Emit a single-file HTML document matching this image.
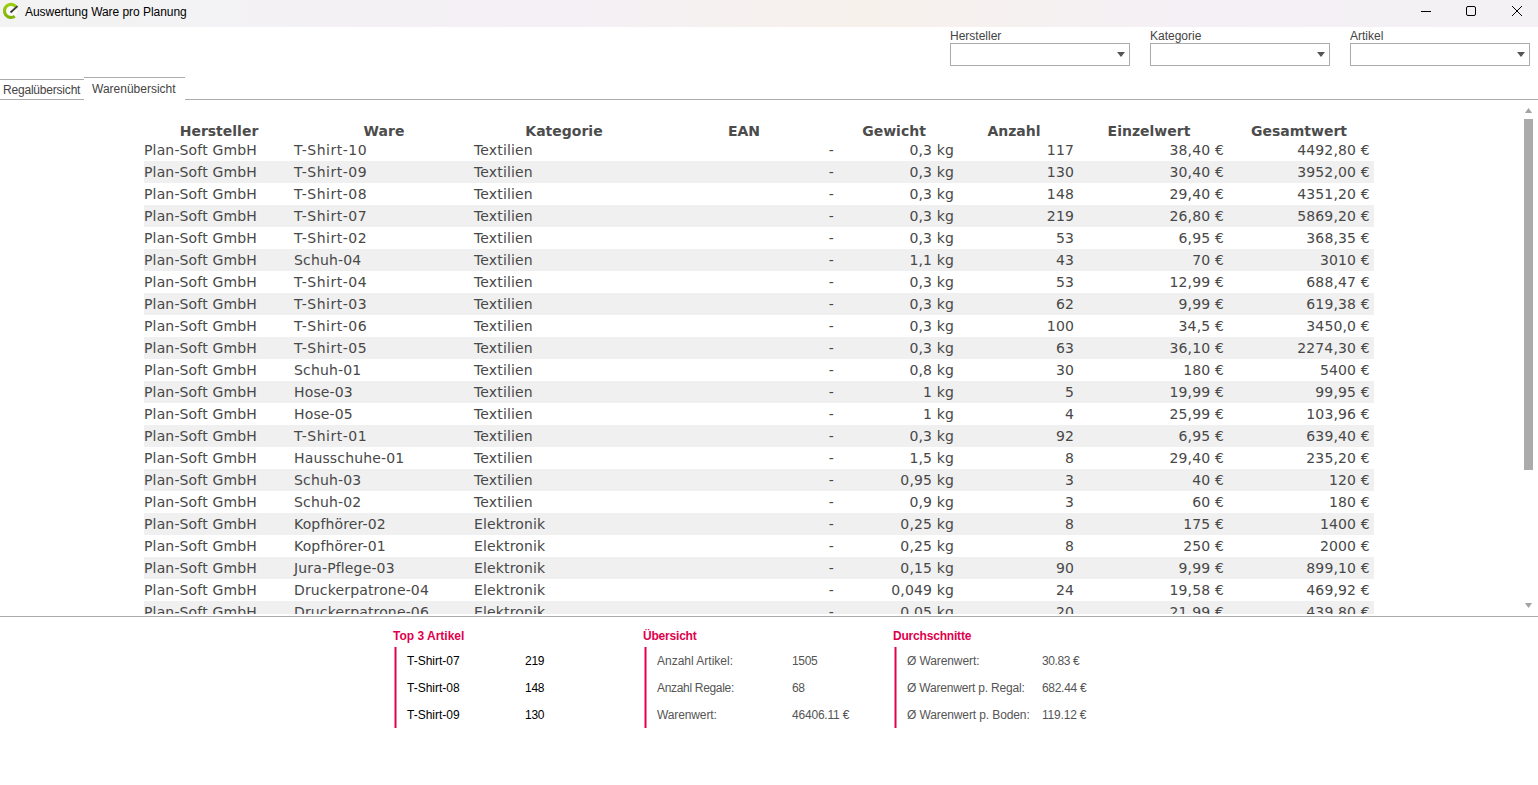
<!DOCTYPE html>
<html lang="de"><head><meta charset="utf-8"><title>Auswertung Ware pro Planung</title>
<style>
html,body{margin:0;padding:0;background:#fff;}
body{width:1538px;height:785px;position:relative;overflow:hidden;font-family:"Liberation Sans",sans-serif;font-size:12px;color:#000;}
.abs{position:absolute;white-space:nowrap;line-height:14px;}
#titlebar{position:absolute;left:0;top:0;width:1538px;height:27px;background:linear-gradient(90deg,#f3f3f3 0,#f3f2f4 200px,#f4f0f5 560px,#f6f1ef 760px,#f7f1ec 860px,#f6f1f0 1000px,#f4f0f5 1200px,#f3f1f4 1538px);}
.lbl{color:#444;}
.combo{position:absolute;top:43px;width:178px;height:21px;border:1px solid #ababab;background:#fff;}
.combo i{position:absolute;right:4px;top:8px;width:0;height:0;border-left:4px solid transparent;border-right:4px solid transparent;border-top:5px solid #555;}
.hl{position:absolute;height:1px;background:#acacac;}
#tbl{position:absolute;left:0;top:100px;width:1520px;height:514px;overflow:hidden;font-family:"DejaVu Sans","Liberation Sans",sans-serif;font-size:14px;color:#484848;}
.h,.r{position:absolute;left:144px;width:1230px;height:22px;line-height:22px;white-space:nowrap;}
.h{top:20px;font-weight:bold;color:#4c4c4c;}
.r{letter-spacing:0.15px;}
.r .t{letter-spacing:0.5px;}
.h span,.r span{position:absolute;top:0;height:22px;box-sizing:border-box;}
.h span{text-align:center;}
.c1{left:0;width:150px;}
.c2{left:150px;width:180px;}
.c3{left:330px;width:180px;}
.c4{left:510px;width:180px;}
.c5{left:690px;width:120px;}
.c6{left:810px;width:120px;}
.c7{left:930px;width:150px;}
.c8{left:1080px;width:150px;}
.r .c4,.r .c5,.r .c6,.r .c7,.r .c8{text-align:right;}
.r .c8{padding-right:4.2px;}
.r:nth-child(even){background:#f0f0f0;}
.sec{position:absolute;top:629px;color:#e0004d;font-weight:bold;}
.bar{position:absolute;top:647px;width:3px;height:81px;background:linear-gradient(90deg,#ef80a6 0,#ef80a6 1px,#e0004d 1px,#e0004d 2px,#ef80a6 2px,#ef80a6 3px);}
.g{color:#555;}
</style></head><body>
<div id="titlebar"></div>
<svg class="abs" style="left:0;top:0" width="24" height="24" viewBox="0 0 24 24">
<defs><linearGradient id="gg" x1="0" y1="0" x2="0" y2="1"><stop offset="0" stop-color="#9bcf10"/><stop offset="1" stop-color="#7fb300"/></linearGradient></defs>
<circle cx="11" cy="10.9" r="6.2" fill="#fafafa"/>
<path d="M16.02 6.69 A6.55 6.55 0 1 0 14.76 16.27" fill="none" stroke="url(#gg)" stroke-width="3.1"/>
<path d="M10.5 12.5 L17.5 6.1" stroke="#3a3a3a" stroke-width="1.9"/>
</svg>
<div class="abs" style="left:25px;top:5px;letter-spacing:-0.05px;">Auswertung Ware pro Planung</div>
<svg class="abs" style="left:1400px;top:0" width="138" height="27" viewBox="0 0 138 27" fill="none" stroke="#000" stroke-width="1">
<path d="M21 11.5 H31"/>
<rect x="66.5" y="6.5" width="9" height="9" rx="1.5"/>
<path d="M112 6 L122 16 M122 6 L112 16"/>
</svg>

<div class="abs lbl" style="left:950px;top:29px;">Hersteller</div>
<div class="abs lbl" style="left:1150px;top:29px;">Kategorie</div>
<div class="abs lbl" style="left:1350px;top:29px;">Artikel</div>
<div class="combo" style="left:950px"><i></i></div>
<div class="combo" style="left:1150px"><i></i></div>
<div class="combo" style="left:1350px"><i></i></div>

<div class="hl" style="left:0;top:79px;width:84px;"></div>
<div class="hl" style="left:84px;top:77px;width:101px;"></div>
<div class="hl" style="left:0;top:99px;width:84px;"></div>
<div class="hl" style="left:185px;top:99px;width:1353px;"></div>
<div class="abs lbl" style="left:3px;top:83px;letter-spacing:-0.2px;">Regalübersicht</div>
<div class="abs lbl" style="left:92px;top:82px;">Warenübersicht</div>

<div id="tbl">
<div class="h"><span class="c1">Hersteller</span><span class="c2">Ware</span><span class="c3">Kategorie</span><span class="c4">EAN</span><span class="c5">Gewicht</span><span class="c6">Anzahl</span><span class="c7">Einzelwert</span><span class="c8">Gesamtwert</span></div>
<div id="rows" style="position:absolute;left:0;top:39px;">
<div class="r" style="top:0px"><span class="c1">Plan-Soft GmbH</span><span class="c2 t">T-Shirt-10</span><span class="c3">Textilien</span><span class="c4">-</span><span class="c5">0,3 kg</span><span class="c6">117</span><span class="c7">38,40 €</span><span class="c8">4492,80 €</span></div>
<div class="r" style="top:22px"><span class="c1">Plan-Soft GmbH</span><span class="c2 t">T-Shirt-09</span><span class="c3">Textilien</span><span class="c4">-</span><span class="c5">0,3 kg</span><span class="c6">130</span><span class="c7">30,40 €</span><span class="c8">3952,00 €</span></div>
<div class="r" style="top:44px"><span class="c1">Plan-Soft GmbH</span><span class="c2 t">T-Shirt-08</span><span class="c3">Textilien</span><span class="c4">-</span><span class="c5">0,3 kg</span><span class="c6">148</span><span class="c7">29,40 €</span><span class="c8">4351,20 €</span></div>
<div class="r" style="top:66px"><span class="c1">Plan-Soft GmbH</span><span class="c2 t">T-Shirt-07</span><span class="c3">Textilien</span><span class="c4">-</span><span class="c5">0,3 kg</span><span class="c6">219</span><span class="c7">26,80 €</span><span class="c8">5869,20 €</span></div>
<div class="r" style="top:88px"><span class="c1">Plan-Soft GmbH</span><span class="c2 t">T-Shirt-02</span><span class="c3">Textilien</span><span class="c4">-</span><span class="c5">0,3 kg</span><span class="c6">53</span><span class="c7">6,95 €</span><span class="c8">368,35 €</span></div>
<div class="r" style="top:110px"><span class="c1">Plan-Soft GmbH</span><span class="c2">Schuh-04</span><span class="c3">Textilien</span><span class="c4">-</span><span class="c5">1,1 kg</span><span class="c6">43</span><span class="c7">70 €</span><span class="c8">3010 €</span></div>
<div class="r" style="top:132px"><span class="c1">Plan-Soft GmbH</span><span class="c2 t">T-Shirt-04</span><span class="c3">Textilien</span><span class="c4">-</span><span class="c5">0,3 kg</span><span class="c6">53</span><span class="c7">12,99 €</span><span class="c8">688,47 €</span></div>
<div class="r" style="top:154px"><span class="c1">Plan-Soft GmbH</span><span class="c2 t">T-Shirt-03</span><span class="c3">Textilien</span><span class="c4">-</span><span class="c5">0,3 kg</span><span class="c6">62</span><span class="c7">9,99 €</span><span class="c8">619,38 €</span></div>
<div class="r" style="top:176px"><span class="c1">Plan-Soft GmbH</span><span class="c2 t">T-Shirt-06</span><span class="c3">Textilien</span><span class="c4">-</span><span class="c5">0,3 kg</span><span class="c6">100</span><span class="c7">34,5 €</span><span class="c8">3450,0 €</span></div>
<div class="r" style="top:198px"><span class="c1">Plan-Soft GmbH</span><span class="c2 t">T-Shirt-05</span><span class="c3">Textilien</span><span class="c4">-</span><span class="c5">0,3 kg</span><span class="c6">63</span><span class="c7">36,10 €</span><span class="c8">2274,30 €</span></div>
<div class="r" style="top:220px"><span class="c1">Plan-Soft GmbH</span><span class="c2">Schuh-01</span><span class="c3">Textilien</span><span class="c4">-</span><span class="c5">0,8 kg</span><span class="c6">30</span><span class="c7">180 €</span><span class="c8">5400 €</span></div>
<div class="r" style="top:242px"><span class="c1">Plan-Soft GmbH</span><span class="c2">Hose-03</span><span class="c3">Textilien</span><span class="c4">-</span><span class="c5">1 kg</span><span class="c6">5</span><span class="c7">19,99 €</span><span class="c8">99,95 €</span></div>
<div class="r" style="top:264px"><span class="c1">Plan-Soft GmbH</span><span class="c2">Hose-05</span><span class="c3">Textilien</span><span class="c4">-</span><span class="c5">1 kg</span><span class="c6">4</span><span class="c7">25,99 €</span><span class="c8">103,96 €</span></div>
<div class="r" style="top:286px"><span class="c1">Plan-Soft GmbH</span><span class="c2 t">T-Shirt-01</span><span class="c3">Textilien</span><span class="c4">-</span><span class="c5">0,3 kg</span><span class="c6">92</span><span class="c7">6,95 €</span><span class="c8">639,40 €</span></div>
<div class="r" style="top:308px"><span class="c1">Plan-Soft GmbH</span><span class="c2">Hausschuhe-01</span><span class="c3">Textilien</span><span class="c4">-</span><span class="c5">1,5 kg</span><span class="c6">8</span><span class="c7">29,40 €</span><span class="c8">235,20 €</span></div>
<div class="r" style="top:330px"><span class="c1">Plan-Soft GmbH</span><span class="c2">Schuh-03</span><span class="c3">Textilien</span><span class="c4">-</span><span class="c5">0,95 kg</span><span class="c6">3</span><span class="c7">40 €</span><span class="c8">120 €</span></div>
<div class="r" style="top:352px"><span class="c1">Plan-Soft GmbH</span><span class="c2">Schuh-02</span><span class="c3">Textilien</span><span class="c4">-</span><span class="c5">0,9 kg</span><span class="c6">3</span><span class="c7">60 €</span><span class="c8">180 €</span></div>
<div class="r" style="top:374px"><span class="c1">Plan-Soft GmbH</span><span class="c2">Kopfhörer-02</span><span class="c3">Elektronik</span><span class="c4">-</span><span class="c5">0,25 kg</span><span class="c6">8</span><span class="c7">175 €</span><span class="c8">1400 €</span></div>
<div class="r" style="top:396px"><span class="c1">Plan-Soft GmbH</span><span class="c2">Kopfhörer-01</span><span class="c3">Elektronik</span><span class="c4">-</span><span class="c5">0,25 kg</span><span class="c6">8</span><span class="c7">250 €</span><span class="c8">2000 €</span></div>
<div class="r" style="top:418px"><span class="c1">Plan-Soft GmbH</span><span class="c2">Jura-Pflege-03</span><span class="c3">Elektronik</span><span class="c4">-</span><span class="c5">0,15 kg</span><span class="c6">90</span><span class="c7">9,99 €</span><span class="c8">899,10 €</span></div>
<div class="r" style="top:440px"><span class="c1">Plan-Soft GmbH</span><span class="c2">Druckerpatrone-04</span><span class="c3">Elektronik</span><span class="c4">-</span><span class="c5">0,049 kg</span><span class="c6">24</span><span class="c7">19,58 €</span><span class="c8">469,92 €</span></div>
<div class="r" style="top:462px"><span class="c1">Plan-Soft GmbH</span><span class="c2">Druckerpatrone-06</span><span class="c3">Elektronik</span><span class="c4">-</span><span class="c5">0,05 kg</span><span class="c6">20</span><span class="c7">21,99 €</span><span class="c8">439,80 €</span></div>
</div>
</div>
<svg class="abs" style="left:1520px;top:100px" width="18" height="516" viewBox="0 0 18 516">
<path d="M5 13 L12 13 L8.5 8 Z" fill="#a3a3a3"/>
<rect x="4" y="19" width="9" height="351" fill="#ababab"/>
<path d="M5 503 L12 503 L8.5 508 Z" fill="#a3a3a3"/>
</svg>
<div class="hl" style="left:0;top:616px;width:1538px;"></div>

<div class="sec abs" style="left:393px;">Top 3 Artikel</div>
<div class="bar" style="left:394px;"></div>
<div class="abs" style="left:407px;top:654px;">T-Shirt-07</div><div class="abs" style="left:525px;top:654px;letter-spacing:-0.26px;">219</div>
<div class="abs" style="left:407px;top:681px;">T-Shirt-08</div><div class="abs" style="left:525px;top:681px;letter-spacing:-0.26px;">148</div>
<div class="abs" style="left:407px;top:708px;">T-Shirt-09</div><div class="abs" style="left:525px;top:708px;letter-spacing:-0.26px;">130</div>

<div class="sec abs" style="left:643px;letter-spacing:-0.2px;">Übersicht</div>
<div class="bar" style="left:644px;"></div>
<div class="abs g" style="left:657px;top:654px;">Anzahl Artikel:</div><div class="abs g" style="left:792px;top:654px;letter-spacing:-0.35px;">1505</div>
<div class="abs g" style="left:657px;top:681px;letter-spacing:-0.32px;">Anzahl Regale:</div><div class="abs g" style="left:792px;top:681px;letter-spacing:-0.4px;">68</div>
<div class="abs g" style="left:657px;top:708px;letter-spacing:-0.12px;">Warenwert:</div><div class="abs g" style="left:792px;top:708px;letter-spacing:-0.2px;">46406.11 €</div>

<div class="sec abs" style="left:893px;letter-spacing:-0.19px;">Durchschnitte</div>
<div class="bar" style="left:894px;"></div>
<div class="abs g" style="left:907px;top:654px;letter-spacing:-0.1px;">Ø Warenwert:</div><div class="abs g" style="left:1042px;top:654px;letter-spacing:-0.38px;">30.83 €</div>
<div class="abs g" style="left:907px;top:681px;letter-spacing:-0.19px;">Ø Warenwert p. Regal:</div><div class="abs g" style="left:1042px;top:681px;letter-spacing:-0.3px;">682.44 €</div>
<div class="abs g" style="left:907px;top:708px;letter-spacing:-0.11px;">Ø Warenwert p. Boden:</div><div class="abs g" style="left:1042px;top:708px;letter-spacing:-0.2px;">119.12 €</div>
</body></html>
